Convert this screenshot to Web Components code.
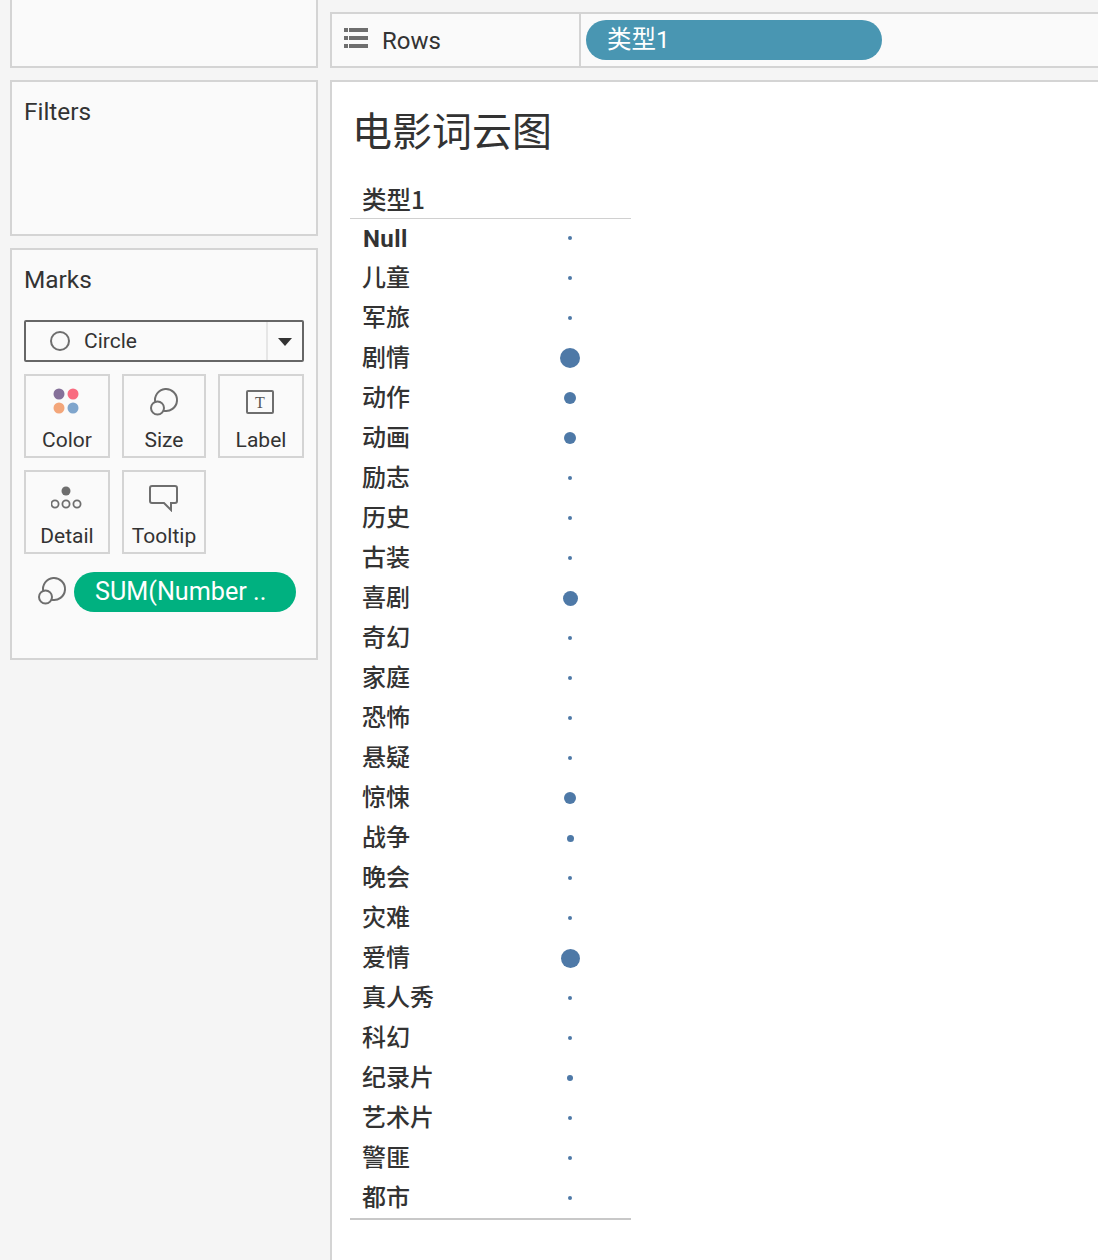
<!DOCTYPE html>
<html lang="zh">
<head>
<meta charset="utf-8">
<title>电影词云图</title>
<style>
  html, body { margin: 0; height: 100%; }
  body {
    background: #f5f5f5;
    color: #333;
    font-family: Roboto, "Noto Sans CJK SC", sans-serif;
    overflow: hidden;
  }
  #app {
    display: grid;
    grid-template-columns: 308px 1fr;
    column-gap: 12px;
    padding-left: 10px;
    height: 1260px;
  }
  #left, #right { display: flex; flex-direction: column; gap: 12px; min-width: 0; }
</style>
</head>
<body>
<div id="app">
  <div id="left">
    <side-card style="height:68px;border-top:none"></side-card>
    <side-card heading="Filters" style="height:156px"></side-card>
    <marks-card style="height:412px"></marks-card>
  </div>
  <div id="right">
    <rows-shelf style="margin-top:12px">类型1</rows-shelf>
    <viz-sheet heading="电影词云图" field="类型1"></viz-sheet>
  </div>
</div>

<script>
// Shared stroke icons, the size icon is used twice
const SIZE_ICON = `<svg width="30" height="30" viewBox="0 0 30 30" fill="none" stroke="#6e6e6e" stroke-width="2">
  <path d="M6.3 15.5A11 11 0 1 1 14.5 23.7"/><circle cx="8.5" cy="21" r="6.5"/></svg>`;

class SideCard extends HTMLElement {
  constructor() {
    super();
    this.attachShadow({ mode: "open" });
    this.shadowRoot.innerHTML = `
    <style>
      :host {
        display: block;
        box-sizing: border-box;
        background: #fafafa;
        border: 2px solid #d4d4d4;
      }
      h2 {
        margin: 0;
        padding: 15px 0 0 12px;
        font: 400 24.4px/30px Roboto, sans-serif;
        color: #333;
      }
    </style>
    ${this.getAttribute("heading") ? `<h2>${this.getAttribute("heading")}</h2>` : ""}
    <slot></slot>
    `;
  }
}

class MarkButton extends HTMLElement {
  constructor() {
    super();
    this.attachShadow({ mode: "open" });
    this.shadowRoot.innerHTML = `
    <style>
      :host {
        display: flex;
        flex-direction: column;
        align-items: center;
        box-sizing: border-box;
        height: 84px;
        background: #fafafa;
        border: 2px solid #d4d4d4;
        font: 400 21px/26px Roboto, sans-serif;
        color: #333;
      }
      .icon { height: 30px; margin-top: 11px; display: flex; align-items: center; justify-content: center; }
      .label { margin-top: 10px; }
    </style>
    <div class="icon"><slot name="icon"></slot></div>
    <div class="label"><slot></slot></div>
    `;
  }
}

class MarksCard extends HTMLElement {
  constructor() {
    super();
    this.attachShadow({ mode: "open" });
    this.shadowRoot.innerHTML = `
    <style>
      :host {
        display: block;
        box-sizing: border-box;
        background: #fafafa;
        border: 2px solid #d4d4d4;
        padding: 15px 12px 0 12px;
      }
      h2 { margin: 0; font: 400 24.4px/30px Roboto, sans-serif; color: #333; }
      .select {
        display: flex;
        align-items: center;
        box-sizing: border-box;
        height: 42px;
        margin-top: 25px;
        border: 2px solid #666;
        border-radius: 2px;
        font: 400 21px/26px Roboto, sans-serif;
        color: #333;
      }
      .select .ring {
        box-sizing: border-box;
        width: 20px;
        height: 20px;
        margin-left: 24px;
        border: 2px solid #6e6e6e;
        border-radius: 50%;
      }
      .select .name { margin-left: 14px; flex: 1; }
      .select .arrow {
        width: 34px;
        height: 100%;
        border-left: 2px solid #e6e6e6;
        display: flex;
        align-items: center;
        justify-content: center;
      }
      .select .arrow i {
        width: 0;
        height: 0;
        margin-top: 1px;
        border-left: 7px solid transparent;
        border-right: 7px solid transparent;
        border-top: 8px solid #333;
      }
      .grid {
        display: grid;
        grid-template-columns: 86px 84px 86px;
        column-gap: 12px;
        row-gap: 12px;
        margin-top: 12px;
      }
      .field {
        display: flex;
        align-items: center;
        margin-top: 18px;
        padding-left: 13px;
        gap: 7px;
      }
      .pill {
        box-sizing: border-box;
        width: 222px;
        height: 40px;
        padding-left: 21px;
        border-radius: 20px;
        background: #00b180;
        color: #fff;
        font: 400 25.2px/40px Roboto, sans-serif;
      }
      svg { display: block; }
      .field svg { margin-top: -2px; }
    </style>
    <h2>Marks</h2>
    <div class="select">
      <span class="ring"></span>
      <span class="name">Circle</span>
      <span class="arrow"><i></i></span>
    </div>
    <div class="grid">
      <mark-button>
        <svg slot="icon" width="30" height="30" viewBox="2 2 30 30">
          <circle cx="9" cy="9" r="5.5" fill="#857099"/><circle cx="23" cy="9" r="5.5" fill="#f96b80"/>
          <circle cx="9" cy="23" r="5.5" fill="#f3a67a"/><circle cx="23" cy="23" r="5.5" fill="#7fa5cc"/>
        </svg>Color</mark-button>
      <mark-button><span slot="icon">${SIZE_ICON}</span>Size</mark-button>
      <mark-button>
        <svg slot="icon" width="30" height="26" viewBox="1 0 30 26">
          <rect x="2" y="2" width="26" height="22" rx="1" fill="none" stroke="#6e6e6e" stroke-width="2"/>
          <text x="15" y="19" text-anchor="middle" font-family="Liberation Serif, serif" font-size="16" fill="#555">T</text>
        </svg>Label</mark-button>
      <mark-button>
        <svg slot="icon" width="32" height="24" viewBox="1 0 32 24">
          <circle cx="16" cy="5" r="4.5" fill="#6e6e6e"/>
          <circle cx="5" cy="18" r="3.6" fill="none" stroke="#6e6e6e" stroke-width="1.8"/>
          <circle cx="16" cy="18" r="3.6" fill="none" stroke="#6e6e6e" stroke-width="1.8"/>
          <circle cx="27" cy="18" r="3.6" fill="none" stroke="#6e6e6e" stroke-width="1.8"/>
        </svg>Detail</mark-button>
      <mark-button>
        <svg slot="icon" width="30" height="28" viewBox="0 0 30 28">
          <path d="M3 2H26a2 2 0 0 1 2 2V17a2 2 0 0 1-2 2H22V26L15 19H3a2 2 0 0 1-2-2V4a2 2 0 0 1 2-2Z" fill="none" stroke="#6e6e6e" stroke-width="2"/>
        </svg>Tooltip</mark-button>
    </div>
    <div class="field">${SIZE_ICON}<div class="pill">SUM(Number ..</div></div>
    `;
  }
}

class RowsShelf extends HTMLElement {
  constructor() {
    super();
    this.attachShadow({ mode: "open" });
    this.shadowRoot.innerHTML = `
    <style>
      :host {
        display: flex;
        box-sizing: border-box;
        height: 56px;
        background: #fafafa;
        border: 2px solid #d4d4d4;
        border-right: none;
      }
      .head {
        display: flex;
        align-items: center;
        box-sizing: border-box;
        width: 249px;
        border-right: 2px solid #d4d4d4;
        padding-left: 12px;
        font: 400 24px/30px Roboto, sans-serif;
        color: #333;
      }
      .head span { margin: 2px 0 0 14px; }
      .pill {
        align-self: center;
        box-sizing: border-box;
        width: 296px;
        height: 40px;
        margin-left: 5px;
        padding-left: 21px;
        border-radius: 20px;
        background: #4996b2;
        color: #fff;
        font: 400 24.5px/40px Roboto, "Noto Sans CJK SC", sans-serif;
      }
      svg { display: block; margin-top: -4px; }
    </style>
    <div class="head">
      <svg width="24" height="20" viewBox="0 0 24 20" fill="#6e6e6e">
        <rect x="0" y="0" width="4" height="4"/><rect x="5" y="0" width="19" height="4"/>
        <rect x="0" y="8" width="4" height="4"/><rect x="5" y="8" width="19" height="4"/>
        <rect x="0" y="16" width="4" height="4"/><rect x="5" y="16" width="19" height="4"/>
      </svg>
      <span>Rows</span>
    </div>
    <div class="pill"><slot></slot></div>
    `;
  }
}

class VizRow extends HTMLElement {
  constructor() {
    super();
    this.attachShadow({ mode: "open" });
    const d = this.getAttribute("size") || 4;
    this.shadowRoot.innerHTML = `
    <style>
      :host {
        display: grid;
        grid-template-columns: 188px 40px 1fr;
        grid-template-rows: 40px;
        align-items: center;
        height: 40px;
        padding-left: 12px;
        font: 500 24px/36px "Noto Sans CJK SC", sans-serif;
        color: #333;
      }
      .name { margin-bottom: 4px; }
      .cell { display: flex; justify-content: center; align-items: center; }
      .dot { width: ${d}px; height: ${d}px; border-radius: 50%; background: #4e79a7; }
    </style>
    <div class="name"><slot></slot></div>
    <div class="cell"><div class="dot"></div></div>
    `;
  }
}

class VizSheet extends HTMLElement {
  constructor() {
    super();
    this.attachShadow({ mode: "open" });
    const rows = [
      ["儿童", 4], ["军旅", 4], ["剧情", 20], ["动作", 12], ["动画", 12],
      ["励志", 4], ["历史", 4], ["古装", 4], ["喜剧", 15], ["奇幻", 4], ["家庭", 4],
      ["恐怖", 4], ["悬疑", 4], ["惊悚", 12], ["战争", 7], ["晚会", 4], ["灾难", 4],
      ["爱情", 19], ["真人秀", 4], ["科幻", 4], ["纪录片", 6], ["艺术片", 4], ["警匪", 4], ["都市", 4]
    ];
    this.shadowRoot.innerHTML = `
    <style>
      :host {
        display: block;
        flex: 1;
        box-sizing: border-box;
        background: #fff;
        border: 2px solid #d4d4d4;
        border-right: none;
        border-bottom: none;
        padding: 0 0 0 18px;
      }
      h1 {
        margin: 0;
        padding: 19px 0 0 2px;
        font: 400 40px/56px "Noto Sans CJK SC", sans-serif;
        color: #333;
      }
      .table { width: 281px; margin-top: 26px; border-bottom: 2px solid #c8c8c8; }
      .field {
        box-sizing: border-box;
        height: 35px;
        padding-left: 12px;
        box-shadow: 0 1px 0 #d0d0d0;
        font: 500 24.5px/31px "Noto Sans CJK SC", sans-serif;
        color: #333;
      }
      .null { font: 700 24px/36px Roboto, sans-serif; letter-spacing: .4px; display: block; margin: 3px 0 -3px 1px; }
    </style>
    <h1>${this.getAttribute("heading")}</h1>
    <div class="table">
      <div class="field">${this.getAttribute("field")}</div>
      <viz-row size="4"><span class="null">Null</span></viz-row>
      ${rows.map(([name, size]) => `<viz-row size="${size}">${name}</viz-row>`).join("")}
    </div>
    `;
  }
}

// Register the custom elements
customElements.define("side-card", SideCard);
customElements.define("mark-button", MarkButton);
customElements.define("marks-card", MarksCard);
customElements.define("rows-shelf", RowsShelf);
customElements.define("viz-row", VizRow);
customElements.define("viz-sheet", VizSheet);
</script>
</body>
</html>
